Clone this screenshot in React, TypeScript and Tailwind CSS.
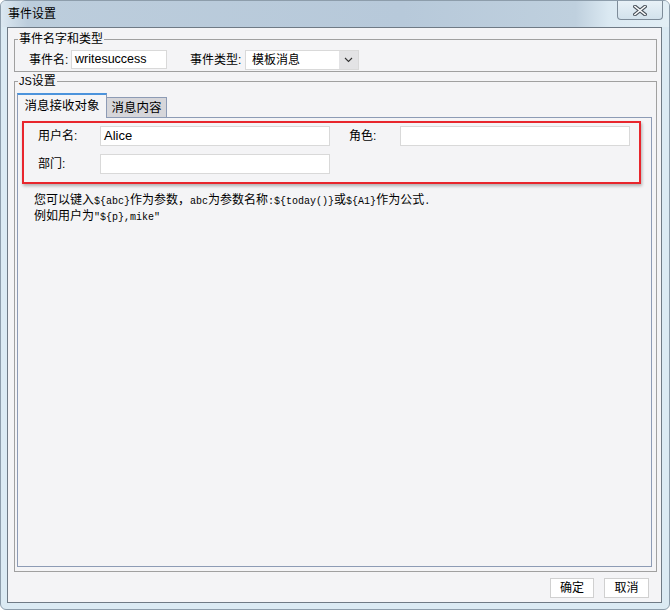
import React from "react";

const Mono = ({ children }: { children: React.ReactNode }) => (
  <span className="font-['Liberation_Mono',monospace] text-[10px]">{children}</span>
);

const Legend = ({ children }: { children: React.ReactNode }) => (
  <div className="-mt-[9px] ml-[3px] w-fit bg-[#f4f4f6] px-[1px] text-[12px] leading-[16px] text-black">
    {children}
  </div>
);

export default function App() {
  return (
    <div className="flex h-[610px] w-[670px] flex-col rounded-[6px] border border-[#8d9dab] bg-[#dbeaf3] font-['Liberation_Sans','Noto_Sans_CJK_SC',sans-serif] text-[12px] text-black">
      {/* title bar */}
      <div className="flex h-[26px] items-start justify-between rounded-t-[5px] bg-[linear-gradient(to_right,#dce8f1_0%,#bccddc_4%,#b7c9da_60%,#bfd0de_86%,#dbe9f2_91%,#e2eef5_100%)]">
        <div className="pl-[7px] pt-[5px] text-[12px] leading-[16px] text-black">事件设置</div>
        <div className="mr-[6px] flex h-[19px] w-[46px] items-center justify-center rounded-b-[4px] border border-t-0 border-[#7e8c99] bg-[linear-gradient(to_bottom,#e8f1f7,#d3e2ec)]">
          <svg width="14" height="11" viewBox="0 0 14 11">
            <path d="M2 1.5 L12 9.5 M12 1.5 L2 9.5" stroke="#4a535c" strokeWidth="3.6" strokeLinecap="square" />
            <path d="M2 1.5 L12 9.5 M12 1.5 L2 9.5" stroke="#ffffff" strokeWidth="1.6" strokeLinecap="square" />
          </svg>
        </div>
      </div>

      {/* client area */}
      <div className="ml-[6px] mr-[7px] flex h-[576px] flex-col border border-[#6f7a85] bg-[#f4f4f6]">
        {/* group 1 */}
        <div className="ml-[6px] mr-[4px] mt-[11px] h-[33px] border border-[#a0a0a0]">
          <Legend>事件名字和类型</Legend>
          <div className="mt-[3px] flex h-[19px] items-center pl-[14px]">
            <span className="w-[42px] leading-[16px]">事件名:</span>
            <div className="flex h-[19px] w-[96px] items-center border border-[#d9d9d9] bg-white pl-[3px] text-[12.5px]">writesuccess</div>
            <span className="ml-[23px] w-[55px] leading-[16px]">事件类型:</span>
            <div className="flex h-[20px] w-[114px] items-center border border-[#d9d9d9] bg-white">
              <span className="flex-1 pl-[6px] leading-[16px]">模板消息</span>
              <div className="flex h-full w-[19px] items-center justify-center bg-[#e3e3e5]">
                <svg width="9" height="6" viewBox="0 0 9 6">
                  <path d="M1 1 L4.5 4.5 L8 1" stroke="#333" strokeWidth="1.1" fill="none" />
                </svg>
              </div>
            </div>
          </div>
        </div>

        {/* group 2 */}
        <div className="ml-[6px] mr-[4px] mt-[9px] flex h-[491px] flex-col border border-[#a0a0a0]">
          <Legend>
            <span className="text-[11px]">JS</span>设置
          </Legend>
          {/* tabs */}
          <div className="relative z-10 mt-[4px] flex items-end pl-[2px]">
            <div className="-mb-[1px] flex h-[25px] w-[90px] items-center justify-center border-x border-t-2 border-x-[#8d9bb5] border-t-[#4b93dc] bg-[#f4f4f6] pb-[1px] text-[12.5px] leading-[16px]">
              消息接收对象
            </div>
            <div className="flex h-[20px] w-[60px] items-center justify-center border-r border-t border-[#8d9bb5] bg-[#d6d6da] text-[12.5px] leading-[16px]">
              消息内容
            </div>
          </div>
          <div className="ml-[2px] mr-[4px] flex h-[450px] flex-col border border-[#8d9bb5] bg-[#f4f4f6]">
            {/* red box */}
            <div className="ml-[4px] mt-[3px] flex h-[63px] w-[619px] flex-col border-2 border-[#e8262d] pl-[14px] pt-[3px] shadow-[1px_2px_3px_rgba(0,0,0,0.28)]">
              <div className="flex h-[20px] items-center">
                <span className="w-[62px] leading-[16px]">用户名:</span>
                <div className="flex h-[20px] w-[230px] items-center border border-[#d9d9d9] bg-white pl-[3px] text-[13px]">Alice</div>
                <span className="ml-[19px] w-[51px] leading-[16px]">角色:</span>
                <div className="h-[20px] w-[230px] border border-[#d9d9d9] bg-white" />
              </div>
              <div className="mt-[8px] flex h-[20px] items-center">
                <span className="w-[62px] leading-[16px]">部门:</span>
                <div className="h-[20px] w-[230px] border border-[#d9d9d9] bg-white" />
              </div>
            </div>
            {/* description */}
            <div className="mt-[9px] pl-[16px] text-[12px] leading-[15px]">
              <div>
                您可以键入<Mono>{"${abc}"}</Mono>作为参数，<Mono>abc</Mono>为参数名称<Mono>{":${today()}"}</Mono>或<Mono>{"${A1}"}</Mono>作为公式<Mono>.</Mono>
              </div>
              <div>
                例如用户为<Mono>{"\"${p},mike\""}</Mono>
              </div>
            </div>
          </div>
        </div>

        {/* buttons */}
        <div className="mr-[12px] mt-[6px] flex justify-end gap-[10px]">
          <button className="flex h-[20px] w-[44px] items-center justify-center border border-[#d0d0d0] bg-white text-[12px] leading-[16px]">确定</button>
          <button className="flex h-[20px] w-[45px] items-center justify-center border border-[#d0d0d0] bg-white text-[12px] leading-[16px]">取消</button>
        </div>
      </div>
    </div>
  );
}
